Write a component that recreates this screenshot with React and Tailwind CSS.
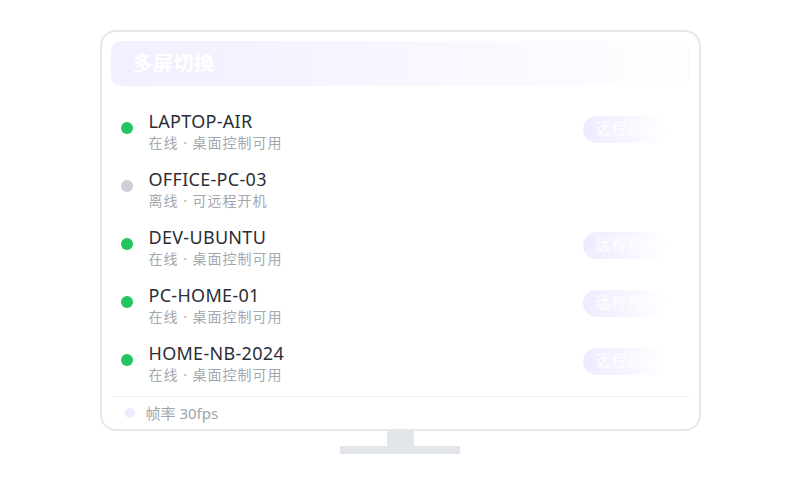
import React from 'react';

const devices = [
    { name: 'LAPTOP-AIR', online: true },
    { name: 'OFFICE-PC-03', online: false },
    { name: 'DEV-UBUNTU', online: true },
    { name: 'PC-HOME-01', online: true },
    { name: 'HOME-NB-2024', online: true },
];

export default function App() {
    return (
        <div
            className="w-[800px] h-[500px] bg-white flex flex-col items-center pt-[30px]"
            style={{ fontFamily: '"Noto Sans", "Noto Sans CJK SC", sans-serif' }}
        >
            {/* Monitor screen */}
            <div className="w-[601px] h-[401px] border-2 border-[#e4e7eb] rounded-[16px] bg-white pt-[9px] px-[9px] flex flex-col">
                {/* Header */}
                <div className="h-[45px] shrink-0 rounded-[10px] bg-gradient-to-r from-[#f2efff] via-[#f8f6ff] to-[#fefeff] flex items-center justify-between pl-[22px]">
                    <span className="text-white text-[20px] font-bold tracking-[0.5px]">多屏切换</span>
                    <div className="flex items-center gap-[12px] h-full">
                        <span className="text-white text-[13px]">1 / 5</span>
                        <span className="w-px h-[28px] bg-[#f2f2f5]"></span>
                    </div>
                </div>

                {/* Device list */}
                <div className="flex flex-col gap-[14px] pt-[23px] px-[10px] flex-1">
                    {devices.map((d) => (
                        <div key={d.name} className="flex items-center h-[44px] pr-[13px]">
                            <span
                                className={`w-[12px] h-[12px] rounded-full shrink-0 -mt-[6px] ${d.online ? 'bg-[#22c55e]' : 'bg-[#cbd0d6]'}`}
                            ></span>
                            <div className="ml-[16px] flex flex-col flex-1">
                                <span className="text-[18px] leading-[24px] text-[#2a2e36] tracking-[0.3px]">{d.name}</span>
                                <span className="text-[14px] leading-[20px] text-[#a3a8b0] tracking-[1px]">
                                    {d.online ? '在线 · 桌面控制可用' : '离线 · 可远程开机'}
                                </span>
                            </div>
                            {d.online && (
                                <div className="w-[84px] h-[27px] rounded-full bg-gradient-to-r from-[#efebff] via-[#f6f4ff] to-white/0 overflow-hidden flex items-center pl-[12px] mt-[-4px]">
                                    <span className="text-white text-[16px] whitespace-nowrap" style={{ fontFamily: '"Liberation Serif", serif' }}>远程控制</span>
                                </div>
                            )}
                        </div>
                    ))}
                </div>

                {/* Footer */}
                <div className="border-t border-[#eef0f3] mx-[1px] flex items-center h-[33px] shrink-0 pl-[13px]">
                    <span className="w-[10px] h-[10px] rounded-full bg-[#eeeaff]"></span>
                    <span className="ml-[11px] text-[15px] text-[#a0a5ae]">帧率 30fps</span>
                </div>
            </div>

            {/* Stand */}
            <div className="w-[27px] h-[15px] bg-[#e2e6ea]"></div>
            <div className="w-[120px] h-[8px] bg-[#e2e6ea]"></div>
        </div>
    );
}
